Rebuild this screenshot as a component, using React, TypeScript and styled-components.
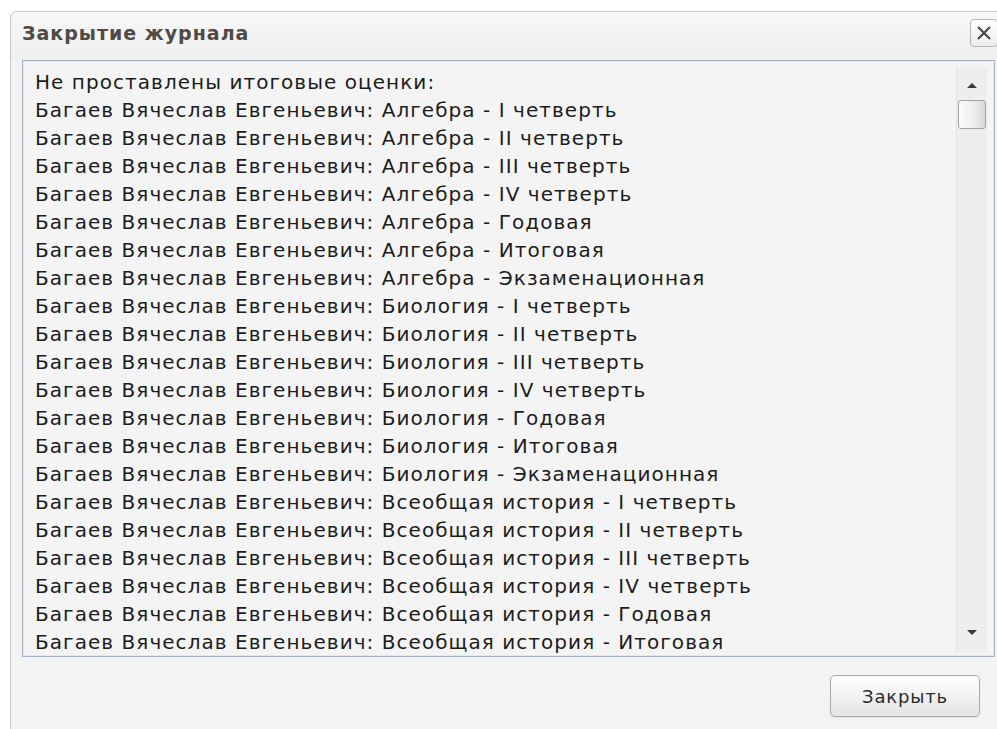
import React from 'react';
import styled, { createGlobalStyle } from 'styled-components';

const GlobalStyle = createGlobalStyle`
  html, body {
    margin: 0;
    padding: 0;
    background: #ffffff;
    overflow: hidden;
  }
  body {
    font-family: "DejaVu Sans", Verdana, sans-serif;
  }
`

const Page = styled.div`
  padding: 11px 0 0 10px;
  width: 997px;
  height: 729px;
  box-sizing: border-box;
`
const Window = styled.div`
  width: 997px;
  height: 740px;
  box-sizing: border-box;
  border: 1px solid #c9c9c9;
  border-radius: 7px 7px 0 0;
  background: #f3f3f3;
  display: flex;
  flex-direction: column;
`
const TitleBar = styled.div`
  height: 48px;
  display: flex;
  align-items: center;
  justify-content: space-between;
  padding: 0 8px 6px 11px;
  box-sizing: border-box;
  background: linear-gradient(#f7f7f7, #efefef);
  border-radius: 7px 7px 0 0;
`
const Title = styled.span`
  font-weight: bold;
  font-size: 19px;
  letter-spacing: 1px;
  color: #4f4a45;
`
const CloseButton = styled.div`
  width: 28px;
  height: 28px;
  box-sizing: border-box;
  border: 1px solid #b4b4b4;
  border-radius: 4px;
  background: linear-gradient(#ffffff, #ececec);
  display: flex;
  align-items: center;
  justify-content: center;
`
const MessageBox = styled.div`
  margin: 0 11px;
  height: 597px;
  box-sizing: border-box;
  border: 1px solid #aab3c4;
  box-shadow: inset 0 0 0 1px #e4e7ec;
  background: #f4f4f4;
  display: flex;
`
const Lines = styled.div`
  flex: 1;
  overflow: hidden;
  padding: 7px 0 0 12px;
`
const Line = styled.div`
  font-size: 20px;
  line-height: 28px;
  letter-spacing: 1.05px;
  color: #1c1c1c;
  white-space: nowrap;
`
const ScrollTrack = styled.div`
  width: 30px;
  margin: 6px 7px 4px 0;
  background: #eeeeee;
  border-left: 1px solid #e2e2e2;
  display: flex;
  flex-direction: column;
  align-items: center;
`
const Arrow = styled.div<{ $down?: boolean }>`
  width: 0;
  height: 0;
  border-left: 5px solid transparent;
  border-right: 5px solid transparent;
  ${p => p.$down
    ? 'border-top: 5px solid #3a3a3a;'
    : 'border-bottom: 5px solid #3a3a3a;'}
  margin: ${p => (p.$down ? 'auto 0 17px' : '16px 0 0')};
`
const Thumb = styled.div`
  width: 28px;
  height: 29px;
  margin-top: 12px;
  box-sizing: border-box;
  border: 1px solid #a3a3a3;
  border-radius: 3px;
  background: linear-gradient(90deg, #fbfbfb, #ececec 60%, #d8d8d8);
`
const Footer = styled.div`
  display: flex;
  justify-content: flex-end;
  padding: 18px 26px 0 0;
`
const Button = styled.button`
  width: 150px;
  height: 42px;
  border: 1px solid #a8a8a8;
  border-radius: 5px;
  background: linear-gradient(#ffffff, #f0f0f0 55%, #e4e4e4);
  font-family: "DejaVu Sans", Verdana, sans-serif;
  font-size: 18px;
  letter-spacing: 0.8px;
  color: #2b2b2b;
  box-shadow: 0 1px 1px rgba(0, 0, 0, 0.08);
`

const subjects = ['Алгебра', 'Биология', 'Всеобщая история'];
const periods = ['I четверть', 'II четверть', 'III четверть', 'IV четверть', 'Годовая', 'Итоговая', 'Экзаменационная'];

const lines: string[] = ['Не проставлены итоговые оценки:'];
subjects.forEach(s =>
  periods.forEach(p => lines.push(`Багаев Вячеслав Евгеньевич: ${s} - ${p}`))
);

function App() {
  return (
    <>
      <GlobalStyle />
      <Page>
        <Window>
          <TitleBar>
            <Title>Закрытие журнала</Title>
            <CloseButton>
              <svg width="16" height="16" viewBox="0 0 16 16">
                <path d="M2 2 L14 14 M14 2 L2 14" stroke="#444" strokeWidth="2" />
              </svg>
            </CloseButton>
          </TitleBar>
          <MessageBox>
            <Lines>
              {lines.map((l, i) => <Line key={i}>{l}</Line>)}
            </Lines>
            <ScrollTrack>
              <Arrow />
              <Thumb />
              <Arrow $down />
            </ScrollTrack>
          </MessageBox>
          <Footer>
            <Button>Закрыть</Button>
          </Footer>
        </Window>
      </Page>
    </>
  );
}

export default App;
